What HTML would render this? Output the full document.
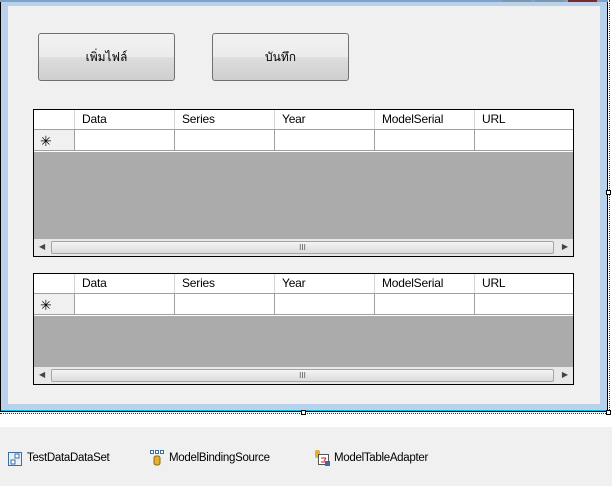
<!DOCTYPE html>
<html><head><meta charset="utf-8"><style>
*{margin:0;padding:0;box-sizing:border-box}
body{width:612px;height:486px;background:#f0f0f0;position:relative;overflow:hidden;font-family:"Liberation Sans",sans-serif;font-size:12px;color:#000}
.a{position:absolute}
.btn{position:absolute;border:1px solid #707070;border-radius:3px;background:linear-gradient(#f2f2f2 0,#ebebeb 50%,#dddddd 51%,#cfcfcf 100%);text-align:center;line-height:46px;font-size:12px;font-family:"Liberation Sans","Noto Sans CJK SC",sans-serif}
.grid{position:absolute;border:1px solid #000;background:#ababab;overflow:hidden}
.hdr{position:absolute;left:0;right:0;top:0;height:20px;background:#fff;border-bottom:1px solid #a0a0a0}
.c{position:absolute;top:0;height:100%;border-right:1px solid #d5d5d5;padding-left:7px;line-height:19px;letter-spacing:-0.2px}
.row{position:absolute;left:0;right:0;top:20px;height:22px;background:#fff}
.rc{position:absolute;top:0;height:21px;border-right:1px solid #a0a0a0;border-bottom:1px solid #a0a0a0}
.sb{position:absolute;left:0;right:0;bottom:0;height:17px;background:#e8e8e8}
.th{position:absolute;left:17px;right:19px;top:2px;height:13px;border:1px solid #a5a5a5;border-radius:2px;background:linear-gradient(#f3f3f3,#dcdcdc);text-align:center;font-size:8px;line-height:11px;color:#555}
.t{font-size:11.5px;letter-spacing:-0.3px}
</style></head><body>
<div class="a" style="left:0;top:0;width:612px;height:427px;background:#fff"></div>
<div class="a" style="left:0;top:0;width:608px;height:412px;background:#b9d1ea;border-left:1px solid #000;border-right:1px solid #000;border-bottom:1px solid #000"></div>
<div class="a" style="left:1px;top:410px;width:606px;height:1px;background:#00c8e8"></div>
<div class="a" style="left:0;top:0;width:608px;height:2px;background:#7ea3c8"></div>
<div class="a" style="left:502px;top:0;width:29px;height:2px;background:#8096ad"></div>
<div class="a" style="left:535px;top:0;width:29px;height:2px;background:#8096ad"></div>
<div class="a" style="left:568px;top:0;width:29px;height:2px;background:#7a2a2a"></div>
<div class="a" style="left:609px;top:0;width:0;height:414px;border-left:1px dotted #333"></div>
<div class="a" style="left:0;top:413px;width:610px;height:0;border-top:1px dotted #333"></div>
<div class="a" style="left:301px;top:410px;width:5px;height:5px;background:#fff;border:1px solid #000"></div>
<div class="a" style="left:606px;top:190px;width:5px;height:5px;background:#fff;border:1px solid #000"></div>
<div class="a" style="left:606px;top:410px;width:5px;height:5px;background:#fff;border:1px solid #000"></div>
<div class="a" style="left:8px;top:6px;width:592px;height:398px;background:#f0f0f0"></div>

<div class="btn" style="left:38px;top:33px;width:137px;height:48px">เพิ่มไฟล์</div>
<div class="btn" style="left:212px;top:33px;width:137px;height:48px">บันทึก</div>

<div class="grid" style="left:33px;top:109px;width:541px;height:148px">
 <div class="hdr"><div class="c" style="left:0;width:41px"></div><div class="c" style="left:41px;width:100px">Data</div><div class="c" style="left:141px;width:100px">Series</div><div class="c" style="left:241px;width:100px">Year</div><div class="c" style="left:341px;width:100px">ModelSerial</div><div class="c" style="left:441px;width:100px;border:0">URL</div></div>
 <div class="row"><div class="rc" style="left:0;width:41px;background:#f0f0f0;padding:4px 0 0 6px;font-size:14px;line-height:14px">✳</div><div class="rc" style="left:41px;width:100px"></div><div class="rc" style="left:141px;width:100px"></div><div class="rc" style="left:241px;width:100px"></div><div class="rc" style="left:341px;width:100px"></div><div class="rc" style="left:441px;width:100px;border-right:0"></div></div>
 <div class="sb"><span class="a" style="left:5px;top:3px;font-size:8px;color:#444">◀</span><div class="th">III</div><span class="a" style="right:5px;top:3px;font-size:8px;color:#444">▶</span></div>
</div>

<div class="grid" style="left:33px;top:273px;width:541px;height:112px">
 <div class="hdr"><div class="c" style="left:0;width:41px"></div><div class="c" style="left:41px;width:100px">Data</div><div class="c" style="left:141px;width:100px">Series</div><div class="c" style="left:241px;width:100px">Year</div><div class="c" style="left:341px;width:100px">ModelSerial</div><div class="c" style="left:441px;width:100px;border:0">URL</div></div>
 <div class="row"><div class="rc" style="left:0;width:41px;background:#f0f0f0;padding:4px 0 0 6px;font-size:14px;line-height:14px">✳</div><div class="rc" style="left:41px;width:100px"></div><div class="rc" style="left:141px;width:100px"></div><div class="rc" style="left:241px;width:100px"></div><div class="rc" style="left:341px;width:100px"></div><div class="rc" style="left:441px;width:100px;border-right:0"></div></div>
 <div class="sb"><span class="a" style="left:5px;top:3px;font-size:8px;color:#444">◀</span><div class="th">III</div><span class="a" style="right:5px;top:3px;font-size:8px;color:#444">▶</span></div>
</div>

<svg class="a" style="left:8px;top:452px" width="14" height="14"><rect x="0.5" y="0.5" width="13" height="13" fill="#e8f0fa" stroke="#3a6ea5"/><rect x="7" y="2" width="4" height="4" fill="#fff" stroke="#3a6ea5"/><rect x="3" y="8" width="4" height="4" fill="#fff" stroke="#3a6ea5"/></svg>
<div class="a t" style="left:27px;top:452px">TestDataDataSet</div>
<svg class="a" style="left:150px;top:450px" width="16" height="16"><rect x="0.5" y="0.5" width="3" height="3" fill="#fff" stroke="#3a6ea5"/><rect x="5.5" y="0.5" width="3" height="3" fill="#fff" stroke="#3a6ea5"/><rect x="10.5" y="0.5" width="3" height="3" fill="#fff" stroke="#3a6ea5"/><rect x="4" y="6" width="6" height="9" rx="2" fill="#e0b030" stroke="#8a6a10"/></svg>
<div class="a t" style="left:169px;top:452px">ModelBindingSource</div>
<svg class="a" style="left:315px;top:450px" width="16" height="16"><rect x="0" y="0" width="5" height="8" rx="2" fill="#e0b030"/><rect x="3.5" y="4.5" width="10" height="10" fill="#fff" stroke="#555"/><path d="M6 8h5M11 8l-2 3M6 12h4" stroke="#d02020" fill="none"/><rect x="10" y="11" width="5" height="5" fill="#3a6ea5"/></svg>
<div class="a t" style="left:334px;top:452px">ModelTableAdapter</div>
</body></html>
